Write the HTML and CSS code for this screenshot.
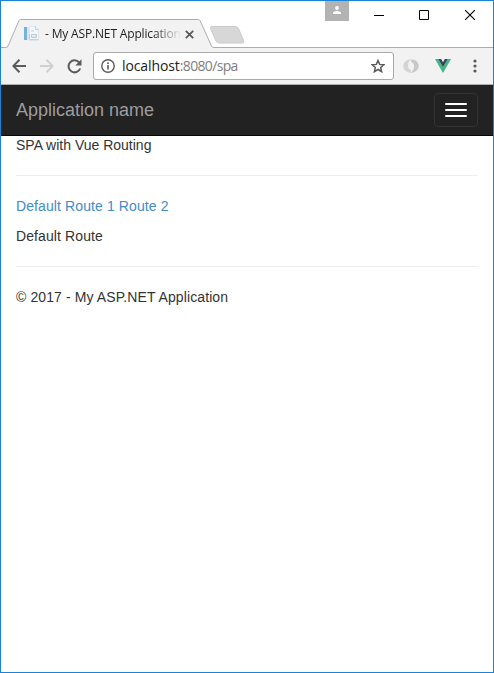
FILE: index.html
```html
<!DOCTYPE html>
<html lang="en">
<head>
<meta charset="utf-8">
<title>- My ASP.NET Application</title>
<link rel="stylesheet" href="styles.css">
</head>
<body>
<div class="window">
  <header class="titlebar">
    <svg class="tab-shape" width="246" height="29" viewBox="0 0 246 29">
      <path d="M0 28.5H4.500Q6.500 28.500 7 27L18 1.500Q18.500 .5 19.500 .5H197.500Q198.500 .5 199 1.500L210.500 27Q211.200 28.500 213 28.500H246V29H0Z" fill="#f2f2f2"/>
      <path d="M0 28.500H4.500Q6.500 28.500 7 27L18 1.500Q18.500 .5 19.500 .5H197.500Q198.500 .5 199 1.500L210.500 27Q211.200 28.500 213 28.500H246" fill="none" stroke="#adadad"/>
      <path d="M211 7.500H234.500Q236.500 7.500 237.500 9.500L242.500 21.500Q243.500 24 241.500 24H218.500Q216 24 215 22L209.500 9.500Q209 7.500 211 7.500Z" fill="#d7d7d7" stroke="#cacaca"/>
    </svg>
    <div class="tab">
      <svg width="16" height="16" viewBox="0 0 16 16">
        <path d="M1 1h5v13H1z" fill="#d3e8f4"/><path d="M0 1h3v13H0z" fill="#74b2d8"/>
        <path d="M5.500.5h6l3 3v11h-9z" fill="#f5f8fa" stroke="#dde5ec"/>
        <path d="M11.500.5v3h3M7 5h3M6 13.500h8" fill="none" stroke="#c3d0dc"/>
        <path d="M7.500 8.500h5v3h-5zM5.500 13v-5" fill="#e3ebf2" stroke="#bccad8"/>
      </svg>
      <span class="tab-title">- My ASP.NET Application</span>
      <svg class="tab-close" width="9" height="9" viewBox="0 0 9 9"><path d="M.8.8l7.400 7.400M8.200.8L.8 8.200" stroke="#5a5a5a" stroke-width="1.800"/></svg>
    </div>
    <div class="controls">
      <div class="profile"><svg width="8" height="8" viewBox="0 0 8 8"><circle cx="4" cy="2" r="1.900" fill="#fff"/><path d="M0 8V6.600Q1 5 4 5t4 1.600V8z" fill="#fff"/></svg></div>
      <svg class="min" width="10" height="11" viewBox="0 0 10 11"><path d="M0 5.500h10" stroke="#000"/></svg>
      <svg class="max" width="10" height="10" viewBox="0 0 10 10"><path d="M.5.5h9v9h-9z" fill="none" stroke="#000"/></svg>
      <svg class="close" width="10" height="10" viewBox="0 0 10 10"><path d="M0 0l10 10M10 0L0 10" stroke="#000" stroke-width="1.100"/></svg>
    </div>
  </header>
  <div class="toolbar">
    <svg class="back" width="14" height="14" viewBox="0 0 14 14"><path d="M14 7H1.500M7.500.8L1.300 7l6.200 6.200" fill="none" stroke="#5a5a5a" stroke-width="2"/></svg>
    <svg class="forward" width="14" height="14" viewBox="0 0 14 14"><path d="M0 7h12.500M6.500.8L12.700 7l-6.200 6.200" fill="none" stroke="#d0d0d0" stroke-width="2"/></svg>
    <svg class="reload" width="15" height="15" viewBox="0 0 15 15"><path d="M12.200 3.500A6 6 0 1 0 13.200 9.500" fill="none" stroke="#5a5a5a" stroke-width="2"/><path d="M14.500.3v6.200H8.300z" fill="#5a5a5a"/></svg>
    <div class="address">
      <svg width="14" height="14" viewBox="0 0 14 14"><circle cx="7" cy="7" r="6.200" fill="none" stroke="#5a5a5a" stroke-width="1.400"/><path d="M7 6v4.500M7 3.300v1.600" stroke="#5a5a5a" stroke-width="1.600"/></svg>
      <span class="url">localhost<span class="path">:8080/spa</span></span>
      <svg class="star" width="14" height="14" viewBox="0 0 14 14"><path d="M7 1.500l1.650 3.900 4.250.37-3.230 2.780.97 4.150L7 10.500l-3.640 2.200.97-4.150L1.100 5.770l4.250-.37z" fill="none" stroke="#5a5a5a" stroke-width="1.500"/></svg>
    </div>
    <svg class="swirl" width="16" height="16" viewBox="0 0 16 16"><path d="M7.500 14.500C3.500 14.500.3 12 .3 8.200.3 4 4 .8 9.500 1.200 6.500 2 5 4 5 7.500c0 2.500 1 4 3 4.500z" fill="#d4d4d4"/><path d="M8.500 1.500C12.500 1.500 15.700 4 15.700 7.800c0 4.200-3.700 7.400-9.200 7C9.500 14 11 12 11 8.500 11 6 10 4.500 8 4z" fill="#c8c8c8"/></svg>
    <svg class="vue" width="16" height="14" viewBox="0 0 16 14"><path d="M0 0h3.200L8 8.300 12.800 0H16L8 14z" fill="#41b883"/><path d="M3.200 0h3L8 3.200 9.800 0h3L8 8.300z" fill="#35495e"/></svg>
    <svg class="dots" width="4" height="14" viewBox="0 0 4 14"><g fill="#5a5a5a"><circle cx="2" cy="2" r="1.600"/><circle cx="2" cy="7" r="1.600"/><circle cx="2" cy="12" r="1.600"/></g></svg>
  </div>
  <nav class="navbar">
    <a class="brand">Application name</a>
    <button class="toggle" aria-label="Menu"><i></i><i></i><i></i></button>
  </nav>
  <main class="content">
    <div>SPA with Vue Routing</div>
    <hr>
    <p class="links"><a>Default</a> <a>Route 1</a> <a>Route 2</a></p>
    <div class="view">Default Route</div>
    <hr>
    <footer>© 2017 - My ASP.NET Application</footer>
  </main>
</div>
</body>
</html>
```
FILE: styles.css
```css
* { box-sizing: border-box; }
body { margin: 0; background: #fff; font-family: "Liberation Sans", Arial, sans-serif; }
svg { display: block; flex: none; }
.window { width: 494px; height: 673px; border: 1px solid #1883d7; overflow: hidden; }
.titlebar { position: relative; height: 47px; display: flex; justify-content: space-between; border-bottom: 1px solid #adadad; }
.tab-shape { position: absolute; left: 0; bottom: -1px; }
.tab { position: relative; display: flex; align-items: center; height: 28px; margin: 19px 0 0 23px; }
.tab-title {
  width: 136px; margin-left: 5px; white-space: nowrap;
  font: 12px/16px "Open Sans", sans-serif; color: #222; letter-spacing: -0.16px;
  -webkit-mask-image: linear-gradient(to right, #000 108px, transparent 136px);
  mask-image: linear-gradient(to right, #000 108px, transparent 136px);
}
.tab-close { margin-left: 4px; }
.controls { display: flex; align-items: flex-start; }
.profile { width: 24px; height: 20px; padding: 5px 8px; background: #b3b3b3; }
.min { margin: 9px 0 0 25px; }
.max { margin: 9px 0 0 35px; }
.close { margin: 9px 18px 0 36px; }
.toolbar { height: 37px; display: flex; align-items: center; padding-left: 11px; background: #f2f2f2; border-bottom: 1px solid #b0b0b0; }
.forward { margin-left: 14px; }
.reload { margin-left: 13px; }
.address { display: flex; align-items: center; width: 301px; height: 28px; margin-left: 11px; padding: 0 8px 0 7px; background: #fff; border: 1px solid #a9a9a9; border-radius: 3px; }
.url { flex: 1; margin-left: 7px; font: 14px/20px "Open Sans", sans-serif; color: #222; letter-spacing: -0.1px; }
.path { color: #808080; letter-spacing: -0.65px; }
.swirl { margin-left: 9px; }
.vue { margin-left: 16px; }
.dots { margin-left: 22px; }
.navbar { display: flex; align-items: center; justify-content: space-between; height: 51px; padding: 0 15px; background: #222; border-bottom: 1px solid #080808; }
.brand { font-size: 18px; line-height: 20px; color: #9d9d9d; }
.toggle { display: flex; flex-direction: column; gap: 4px; width: 44px; height: 34px; padding: 9px 10px; background: transparent; border: 1px solid #333; border-radius: 4px; }
.toggle i { width: 22px; height: 2px; background: #fff; border-radius: 1px; }
.content { padding: 0 15px; font-size: 14px; line-height: 20px; color: #333; margin-top: -1px; }
.content hr { margin: 20px 0; border: 0; border-top: 1px solid #eee; }
.links { margin: 0 0 10px; }
.links a { color: #428bca; }
.links, .view, footer { letter-spacing: 0.1px; }
```
